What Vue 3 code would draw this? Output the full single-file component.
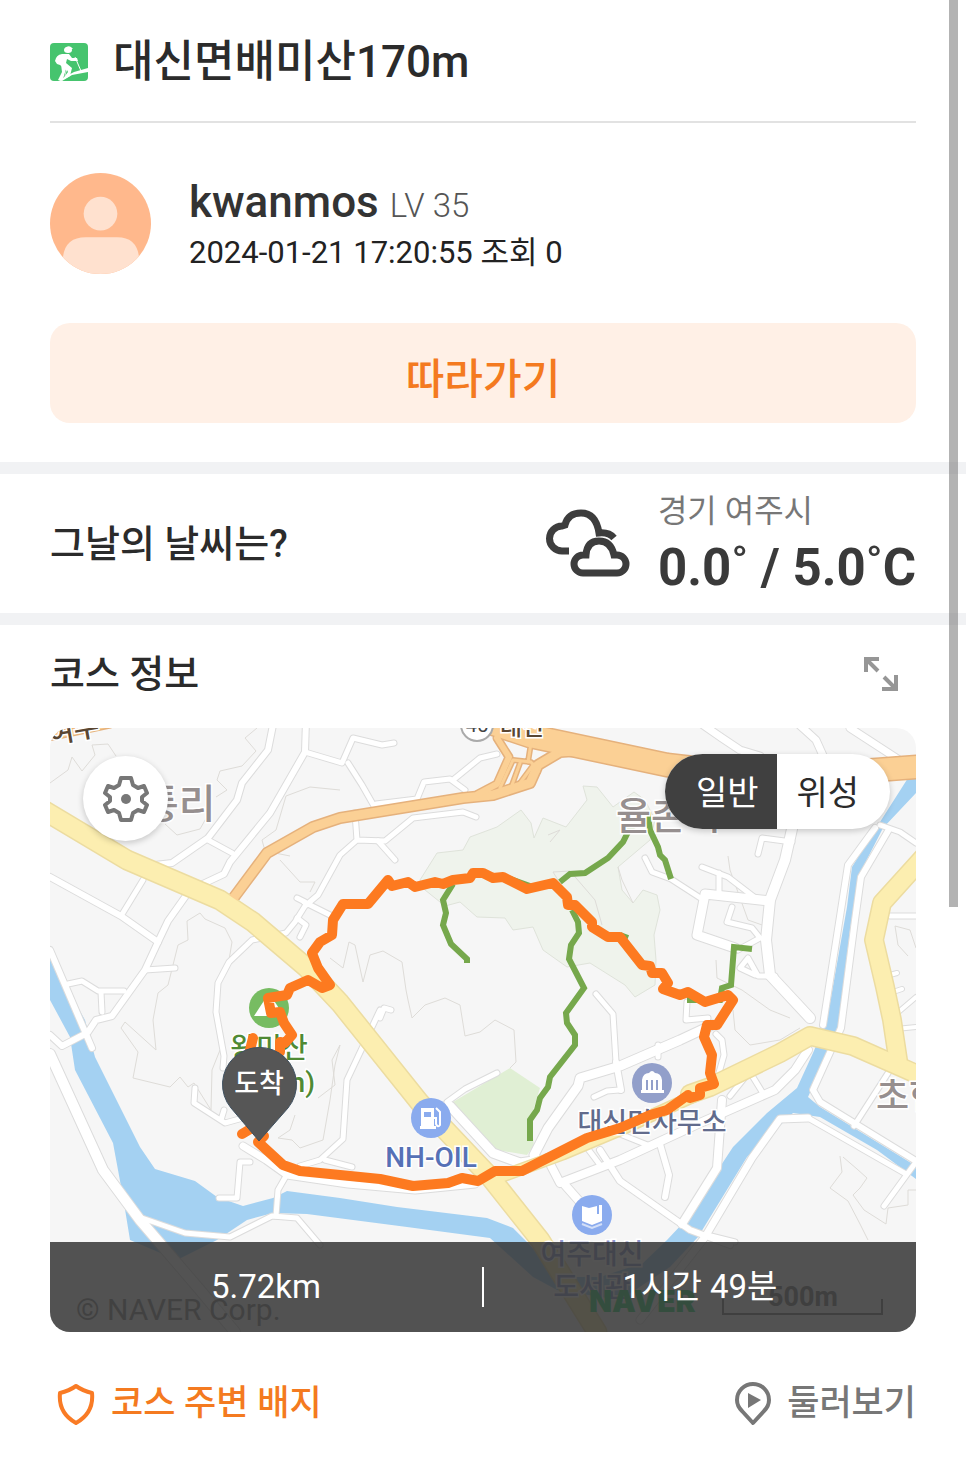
<template>
  <main class="course-view">
    <!-- 코스 제목 -->
    <header class="title-row">
      <svg class="title-icon" viewBox="0 0 38 38" aria-hidden="true">
        <rect width="38" height="38" rx="4" fill="#46c46e" />
        <ellipse cx="18" cy="7" rx="4" ry="3" fill="#fff" />
        <path d="M15 5Q18 2 21 4L23 6H17Z" fill="#fff" />
        <path d="M5 18Q6 12 12 11L19 11L22 15L27 15L28 18L21 18L17 16L16 20L22 25L20 33L14 36L16 27L10 22L7 21Z" fill="#fff" />
        <path d="M11 21L16 26L13 36L11 38L8 37L12 29Z" fill="#fff" />
        <path d="M25 14L31 28" stroke="#fff" stroke-width="1" />
        <path d="M9 37L24 29L38 25V29L22 32L12 38Z" fill="#fff" />
        <path d="M17 27L18 29L15 33Z" fill="#46c46e" />
      </svg>
      <h1>대신면배미산170m</h1>
    </header>

    <!-- 작성자 -->
    <section class="author">
      <svg class="avatar" viewBox="0 0 102 102" aria-hidden="true">
        <defs>
          <clipPath id="avatar-clip"><circle cx="51" cy="51" r="51" /></clipPath>
        </defs>
        <g clip-path="url(#avatar-clip)">
          <rect width="102" height="102" fill="#ffb88c" />
          <circle cx="51" cy="41" r="17" fill="#ffe1cf" />
          <path d="M13 86Q15 65 36 65H68Q88 65 90 86V102H13Z" fill="#ffe1cf" />
        </g>
      </svg>
      <div class="author-text">
        <p class="author-name">{{ course.author }} <span>LV {{ course.level }}</span></p>
        <p class="author-date">{{ course.date }} 조회 {{ course.views }}</p>
      </div>
    </section>

    <div class="follow-row">
      <button type="button" class="follow-btn">따라가기</button>
    </div>

    <!-- 날씨 -->
    <section class="weather">
      <h2>그날의 날씨는?</h2>
      <div class="weather-info">
        <svg class="weather-icon" viewBox="0 0 86 70" fill="none" stroke="#3d3d3d" stroke-width="7" aria-hidden="true">
          <path d="M24 42H17A12 12 0 0 1 17 17L20 16Q23 4 36 4Q51 4 54 24Q64 23 69 29" />
          <path d="M38 64A9 9 0 0 1 38 46H41Q42 32 54 32Q66 32 69 46H72A9 9 0 0 1 72 64Z" />
        </svg>
        <div>
          <p class="weather-place">{{ weather.place }}</p>
          <p class="weather-temp">{{ weather.min }}˚ / {{ weather.max }}˚C</p>
        </div>
      </div>
    </section>

    <!-- 코스 정보 -->
    <section class="course">
      <div class="course-head">
        <h2>코스 정보</h2>
        <button type="button" class="icon-btn" aria-label="지도 확대">
          <svg viewBox="0 0 34 34" width="34" height="34" fill="none" stroke="#969696" stroke-width="4">
            <path d="M15 2H2V15M2 2L14 14M20 20L32 32M32 18V32H18" />
          </svg>
        </button>
      </div>

      <div class="map">
        <svg class="map-canvas" viewBox="50 728 866 604" role="img" aria-label="코스 지도">
          <rect x="50" y="728" width="866" height="604" fill="#f6f6f6" />

          <!-- 숲, 공원 -->
          <path class="forest" d="M437 853L463 850L470 837L497 827L521 810L531 823L534 838L543 818L566 827L587 800L583 786L597 787L613 807L634 792L645 800L655 820L650 840L618 867L622 890L633 903L643 890L657 895L660 910L654 935L656 960L655 985L635 997L625 985L590 963L567 967L543 950L533 927L513 930L505 918L477 917L460 902L445 906L425 890L420 880Z" />
          <path fill="#e0efd4" d="M510 1068L540 1088L530 1120L534 1145L527 1155L497 1150L453 1102Z" />

          <!-- 등고선 -->
          <path v-for="(d, i) in contours" :key="'c' + i" class="contour" :d="d" />

          <!-- 하천 -->
          <path class="water" d="M50 958L85 1020L95 1057L140 1147L155 1169L195 1181L217 1197L243 1206L273 1198L287 1191L340 1198L397 1207L487 1218L513 1228L527 1242L560 1277L600 1277L643 1263L667 1240L683 1223L733 1147L767 1113L797 1088L813 1053L827 1020L847 907L852 867L880 822L908 778L916 775V793L883 828L858 877L850 930L838 1030L808 1097L820 1107L916 1166V1179L877 1150L820 1117L793 1113L747 1157L698 1237L670 1267L620 1300L557 1290L533 1277L490 1238L407 1227L330 1217L307 1214L273 1213L247 1220L217 1240L177 1260L130 1240L123 1197L113 1143L75 1070L70 1037L50 1000Z" />

          <!-- 도로: 외곽선을 먼저 깔고 그 위에 면을 그린다 -->
          <path v-for="(r, i) in roads" :key="'rc' + i" class="road" stroke="#dcdcdc" :stroke-width="r.w + 2" :d="r.d" />
          <path v-for="(r, i) in roads" :key="'r' + i" class="road" stroke="#fff" :stroke-width="r.w" :d="r.d" />
          <path v-for="(r, i) in mainRoads" :key="'mc' + i" class="road" :stroke="r.edge" :stroke-width="r.w + 3" :d="r.d" />
          <path v-for="(r, i) in mainRoads" :key="'m' + i" class="road" :stroke="r.fill" :stroke-width="r.w" :d="r.d" />

          <!-- 등산로 -->
          <path v-for="(d, i) in trails" :key="'t' + i" class="trail" :d="d" />

          <!-- 지명 -->
          <g class="place">
            <text x="142" y="818" font-size="40">통리</text>
            <text x="616" y="829" font-size="38">율촌리</text>
            <text x="876" y="1109" font-size="36">초현</text>
          </g>
          <g class="place road-name">
            <text x="500" y="735" font-size="24">대신</text>
            <text x="50" y="744" font-size="28" transform="rotate(-10 50 744)">여주</text>
          </g>
          <circle cx="477" cy="725" r="16" fill="#fff" stroke="#aaa" stroke-width="2" />
          <text x="477" y="732" font-size="20" text-anchor="middle" class="badge-no">45</text>

          <!-- 산 -->
          <circle cx="269" cy="1008" r="20" fill="#77bc62" />
          <path d="M254 1016L269 993L284 1016Z" fill="#fff" />
          <g class="place mountain">
            <text x="269" y="1058" font-size="28" text-anchor="middle">왕미산</text>
            <text x="315" y="1092" font-size="28" text-anchor="end">(170m)</text>
          </g>

          <!-- 시설 -->
          <g class="place office">
            <circle cx="652" cy="1083" r="20" fill="#929fca" />
            <path d="M642 1080Q643 1073 649 1073Q652 1069 655 1073Q661 1073 662 1080V1090H664V1093H641V1090H642Z" fill="#fff" />
            <path d="M647 1080V1090M652 1080V1090M657 1080V1090" stroke="#929fca" stroke-width="2" />
            <text x="652" y="1132" font-size="27" text-anchor="middle">대신면사무소</text>
          </g>
          <g class="place shop">
            <circle cx="431" cy="1118" r="20" fill="#8aabee" />
            <path d="M421 1108H434V1126H436V1129H420V1126H421Z" fill="#fff" />
            <path d="M424 1112H431V1117H424Z" fill="#8aabee" />
            <path d="M436 1108L440 1112V1125Q438 1128 436 1124V1118H434" fill="none" stroke="#fff" stroke-width="2" />
            <text x="431" y="1167" font-size="28" text-anchor="middle">NH-OIL</text>
          </g>
          <g class="place library">
            <circle cx="592" cy="1215" r="20" fill="#8aabee" />
            <path d="M582 1206L589 1208L597 1206V1214H599V1205H602V1221L592 1225L582 1221Z" fill="#fff" />
            <path d="M582 1224L592 1228L602 1224" stroke="#d3dff8" fill="none" stroke-width="2" />
            <text x="592" y="1264" font-size="28" text-anchor="middle">여주대신</text>
            <text x="592" y="1297" font-size="28" text-anchor="middle">도서관</text>
          </g>

          <!-- 지도 저작권, 축척 -->
          <text x="76" y="1320" font-size="30" class="copyright">© NAVER Corp.</text>
          <text x="589" y="1312" font-size="30" class="naver">NAVER</text>
          <text x="803" y="1306" font-size="27" text-anchor="middle" class="scale">500m</text>
          <path d="M723 1299V1314H882V1299" fill="none" stroke="#777" stroke-width="2" />

          <!-- 이동 경로 -->
          <path class="track" :d="track" />
          <path class="track" d="M253 1038L250 1050M242 1134L252 1128" />

          <!-- 도착 핀 -->
          <path d="M259 1141L231 1108A37 37 0 1 1 288 1108Z" fill="#565656" stroke="#3e5060" stroke-width="1" />
          <text x="259" y="1093" font-size="27" text-anchor="middle" class="pin-label">도착</text>
        </svg>

        <button type="button" class="setting-btn" aria-label="지도 설정">
          <svg viewBox="0 0 46 46" width="46" height="46" fill="none" stroke="#777" stroke-width="4" stroke-linejoin="round">
            <path d="M18 2H28L30 9L35 12L41 10L44 17L39 21V25L44 29L41 36L35 34L30 37L28 44H18L16 37L11 34L5 36L2 29L7 25V21L2 17L5 10L11 12L16 9Z" />
            <circle cx="23" cy="23" r="5" fill="#777" stroke="none" />
          </svg>
        </button>

        <div class="map-type">
          <button
            v-for="t in mapTypes"
            :key="t"
            type="button"
            :class="{ active: t === mapType }"
            :aria-pressed="t === mapType"
            @click="mapType = t"
          >
            {{ t }}
          </button>
        </div>

        <div class="summary">
          <span>{{ course.distance }}</span>
          <i class="summary-line"></i>
          <span>{{ course.time }}</span>
        </div>
      </div>
    </section>

    <!-- 하단 버튼 -->
    <footer class="actions">
      <button type="button" class="badge-btn">
        <svg viewBox="0 0 40 42" width="40" height="42" fill="none" stroke="#f97b25" stroke-width="4" stroke-linejoin="round">
          <path d="M20 3Q27 8 36 10Q38 30 20 40Q2 30 4 10Q13 8 20 3Z" />
        </svg>
        코스 주변 배지
      </button>
      <button type="button" class="look-btn">
        <svg viewBox="0 0 38 44" width="38" height="44" fill="none" stroke="#777" stroke-width="4" stroke-linejoin="round">
          <path d="M19 41L8 29Q3 24 3 18A16 16 0 0 1 35 18Q35 24 30 29Z" />
          <path d="M14 11L27 18L14 26Z" fill="#777" stroke="none" />
        </svg>
        둘러보기
      </button>
    </footer>

    <div class="scroll-thumb"></div>
  </main>
</template>

<script setup>
import { ref } from 'vue'

const course = {
  author: 'kwanmos',
  level: 35,
  date: '2024-01-21 17:20:55',
  views: 0,
  distance: '5.72km',
  time: '1시간 49분',
}

const weather = { place: '경기 여주시', min: '0.0', max: '5.0' }

const mapTypes = ['일반', '위성']
const mapType = ref('일반')

// 주요 도로
const YELLOW = { fill: '#fceeb0', edge: '#ecdca0' }
const ORANGE = { fill: '#fbd095', edge: '#e5b17c' }
const mainRoads = [
  { ...ORANGE, w: 9, d: 'M232 900L267 853L313 827L340 818L463 798L493 795L530 783L538 765L560 752L590 750' },
  { ...ORANGE, w: 6, d: 'M478 794L497 784L509 757L497 738' },
  { ...ORANGE, w: 3, d: 'M500 788L513 760L531 762L538 772M512 785L520 763M520 783L534 764M528 762L531 743' },
  { ...ORANGE, w: 22, d: 'M470 716L530 736L667 765L780 778L850 772L930 766' },
  { ...ORANGE, w: 6, d: 'M44 738L110 724' },
  { ...YELLOW, w: 10, d: 'M500 1177L563 1154L620 1130L703 1092' },
  { ...YELLOW, w: 17, d: 'M930 850L882 903L874 940L885 987L892 1020L898 1060' },
  { ...YELLOW, w: 17, d: 'M690 1094L710 1087L780 1053L810 1036L853 1046L930 1080' },
  { ...YELLOW, w: 18, d: 'M40 808L127 860L220 900L253 922L307 968L340 1003L420 1103L490 1177L540 1240L597 1332' },
]

// 일반 도로
const roads = [
  { w: 6, d: 'M274 720L268 750L242 783L237 800L208 838L172 863L155 865' },
  { w: 6, d: 'M306 720L305 752L270 813L230 862L224 874L190 890L168 921L158 942L145 970L112 1016L96 1020L88 1032' },
  { w: 5, d: 'M305 752L342 763L353 738L382 745L394 743M348 763L362 785L374 806' },
  { w: 5, d: 'M208 840L232 853M143 880L121 916' },
  { w: 6, d: 'M50 877L121 916L158 942' },
  { w: 5, d: 'M145 970L175 968M68 984L82 981L98 991L124 991M101 992L102 1012' },
  { w: 6, d: 'M50 950L92 1048M50 1035L62 1046L85 1034' },
  { w: 5, d: 'M355 813L357 840L385 841L413 818L463 812L476 817M357 840L340 855L318 895L305 906L295 922L286 933L252 940L229 962L218 983L216 1012L224 1056L223 1068' },
  { w: 5, d: 'M378 841L395 860M304 902L332 916M297 898L305 902M297 918L306 925L300 937' },
  { w: 5, d: 'M376 804L417 799L424 782L450 779L465 790M453 780L480 758L497 754' },
  { w: 10, d: 'M50 1054L103 1170L140 1220L200 1290L235 1332' },
  { w: 5, d: 'M142 1218L185 1233L230 1237L272 1216L297 1218L320 1245' },
  { w: 5, d: 'M195 1088L194 1103L225 1123L243 1118M221 1120L224 1110M250 1162H240L237 1198H219M276 1216L278 1190L286 1176' },
  { w: 7, d: 'M243 1146L266 1160L287 1175L348 1184L415 1190L475 1184' },
  { w: 5, d: 'M300 1166L320 1160L343 1139L347 1080L380 1010M325 1160L352 1167' },
  { w: 5, d: 'M380 1018L384 1008L391 1010M447 1102L465 1089L497 1073M596 994L613 1014L616 1062' },
  { w: 9, d: 'M450 1106L493 1153L520 1163L540 1160M534 1155L548 1128L578 1086L580 1078L620 1066L680 1040L712 1025' },
  { w: 8, d: 'M547 1158L560 1183L620 1160L700 1123L775 1090L795 1070L808 1050' },
  { w: 6, d: 'M616 1062L621 1090M600 1150L620 1181L690 1230L730 1245M660 1144L669 1175L665 1197' },
  { w: 5, d: 'M594 1097L607 1091L619 1090M658 1045V1057M610 1130L650 1146M585 1145L600 1165' },
  { w: 8, d: 'M722 1100L717 1168L682 1224M565 1185L580 1202' },
  { w: 5, d: 'M715 1087L724 1055L722 1040L716 1034M748 1069L764 1095M750 1071L730 1096' },
  { w: 7, d: 'M696 720L722 738L740 750L760 756M794 720L816 740L825 760M850 728L910 767' },
  { w: 10, d: 'M792 829L785 860L770 900L766 940L770 975L810 1018' },
  { w: 9, d: 'M770 901L705 894L697 935L735 948' },
  { w: 5, d: 'M702 899L671 879L652 872L645 858M702 867L728 877L758 900M719 873V893M732 907L727 922L752 928L760 938L738 950' },
  { w: 5, d: 'M758 854L762 838L792 842M755 975L740 968L748 958L758 976L775 976M687 1002L686 1020L708 1018' },
  { w: 6, d: 'M875 828L848 865L841 910L823 1025M888 831L861 877L855 920L841 1028L813 1090L820 1102L916 1161' },
  { w: 5, d: 'M880 825L900 832L916 843M890 916H916M854 1126L890 1070' },
  { w: 7, d: 'M808 1118L780 1119L752 1158L705 1237L640 1320' },
  { w: 5, d: 'M808 1118L906 1174M916 1162L884 1206M707 1235L735 1242' },
  { w: 4, d: 'M895 1015L916 997M896 1029L916 1027M890 975L897 973M893 992L902 989' },
]

const contours = [
  'M50 783L68 770L72 757L82 771L95 755L92 745L108 744L116 756',
  'M257 728L245 738L256 751L242 766L220 771L217 780L227 790L216 797',
  'M165 824L177 835L200 829L208 815M340 790L310 787L286 796L276 830L262 840L265 851L290 856M280 860L300 882L315 882L310 892',
  'M229 960L232 942L225 928L205 919L200 913L187 921L188 940L178 945L168 985L158 993L153 1020L156 1050L125 1022L121 1028L138 1052L133 1078L170 1087L180 1077L188 1087L194 1083L211 1110L212 1070L220 1050',
  'M330 958L343 968L349 942L355 945L363 982L370 955L383 951L402 962L406 990L408 1000L412 1018L425 1005L445 998L460 1005L465 1036L480 1032L495 1020L514 1030L516 1062L510 1068',
  'M318 1098L335 1085L332 1060L340 1045L335 1065L330 1100L323 1140L300 1148L292 1140L278 1138L290 1130L295 1115',
  'M728 856L730 870L748 920L765 926M840 1156L842 1172L830 1188L848 1201L860 1224L868 1240M843 1157L857 1169L867 1178L860 1188L853 1195L864 1210L886 1224L888 1208L908 1205L908 1190L916 1190',
  'M733 1010L735 1030L750 1045L780 1040L800 1028M716 960L717 978L742 990L770 1010L790 1018M895 926L910 930L916 948M895 926L898 945L908 956',
  'M550 842L560 830L548 835M633 903L622 880L618 867M558 880L553 872L570 871L595 900L602 925',
]

// 등산로
const trails = [
  'M453 884L443 900L446 913L443 925L451 944L467 959V963',
  'M560 882L570 874L585 873L608 858L623 842L630 828L648 817L650 830L658 847L660 855L665 860L671 879',
  'M505 877L530 886M572 910L578 922L579 933L571 945L569 959L584 988L566 1013L567 1023L575 1035V1045L550 1077L548 1087L540 1098L537 1110L530 1120V1141',
  'M752 949L734 947L731 985L722 988L720 1000H687M620 935L628 938',
]

// 기록된 이동 경로
const track =
  'M280 1052L280 1042L285 1043L292 1035L284 1023L280 1012L271 1013L268 998L287 995L290 988L308 980L322 988L330 985L318 968L312 953L320 942L332 935L333 920L343 904H368L388 880L392 886L408 882L415 887L435 882L443 884L453 880L470 878L473 873H483L493 878L503 877L527 889L553 883L567 897L568 905H575L592 922V927L608 937H620L642 965L650 966L652 973H662L668 983L663 989L680 995L688 992L705 1002L728 995L733 1000L717 1025H707L704 1037L712 1055L710 1073L714 1084L700 1088V1095L690 1098L688 1095L667 1110L650 1115L620 1128L587 1138L522 1171H495L478 1181L462 1178L448 1183L413 1186L380 1179L330 1174L300 1171L283 1165L258 1142L264 1136'
</script>

<style>
body {
  margin: 0;
  background: #fff;
}
</style>

<style scoped>
.course-view {
  position: relative;
  font-family: Roboto, 'Noto Sans CJK KR', sans-serif;
  color: #2b2b2b;
}
h1,
h2,
p {
  margin: 0;
  font-weight: 500;
}
button {
  padding: 0;
  border: 0;
  background: none;
  font: inherit;
  color: inherit;
  cursor: pointer;
}

/* 제목 */
.title-row {
  display: flex;
  align-items: center;
  gap: 25px;
  height: 118px;
  margin: 0 50px;
  padding-top: 3px;
  border-bottom: 2px solid #e2e2e2;
}
.title-icon {
  width: 38px;
  height: 38px;
}
h1 {
  font-size: 44px;
  line-height: 64px;
}

/* 작성자 */
.author {
  display: flex;
  align-items: center;
  gap: 38px;
  padding: 49px 50px 48px;
}
.avatar {
  width: 101px;
  height: 101px;
}
.author-text {
  padding-top: 5px;
}
.author-name {
  font-size: 44px;
  line-height: 50px;
  color: #333;
}
.author-name span {
  font-size: 33px;
  font-weight: 300;
  color: #555;
}
.author-date {
  font-size: 31px;
  line-height: 44px;
  font-weight: 400;
  color: #222;
}
.follow-row {
  padding: 0 50px 39px;
}
.follow-btn {
  display: block;
  width: 100%;
  height: 100px;
  padding-top: 4px;
  border-radius: 20px;
  background: #fff0e6;
  color: #f47a20;
  font-size: 42px;
  font-weight: 500;
}

/* 날씨 */
.weather {
  display: flex;
  align-items: center;
  justify-content: space-between;
  height: 139px;
  padding: 0 50px;
  border-top: 12px solid #f1f2f4;
  border-bottom: 12px solid #f1f2f4;
}
h2 {
  font-size: 38px;
  line-height: 56px;
}
.weather-info {
  display: flex;
  align-items: center;
  gap: 27px;
}
.weather-icon {
  width: 86px;
  height: 70px;
}
.weather-place {
  font-size: 32px;
  line-height: 48px;
  font-weight: 400;
  color: #777;
}
.weather-temp {
  font-size: 51px;
  line-height: 66px;
  font-weight: 700;
  color: #3a3a3a;
  white-space: nowrap;
}

/* 코스 */
.course {
  padding: 0 50px;
}
.course-head {
  display: flex;
  align-items: center;
  justify-content: space-between;
  height: 97px;
  padding: 0 18px 6px 0;
}
.icon-btn svg {
  display: block;
}
.map {
  position: relative;
  overflow: hidden;
  border-radius: 20px;
}
.map-canvas {
  display: block;
  width: 100%;
}
.forest {
  fill: #eff3ec;
  stroke: #dfe3da;
  stroke-width: 1;
}
.contour {
  fill: none;
  stroke: #dedcd8;
  stroke-width: 1;
}
.water {
  fill: #a4d1f2;
}
.road {
  fill: none;
  stroke-linecap: round;
  stroke-linejoin: round;
}
.trail {
  fill: none;
  stroke: #76a84c;
  stroke-width: 6;
}
.track {
  fill: none;
  stroke: #fd7a20;
  stroke-width: 10;
  stroke-linecap: round;
  stroke-linejoin: round;
}
.place {
  fill: #968f8f;
  font-weight: 500;
}
.place text {
  paint-order: stroke;
  stroke: #fff;
  stroke-width: 3;
}
.road-name {
  fill: #5a4632;
}
.badge-no {
  fill: #444;
}
.mountain {
  fill: #4f8a34;
}
.office {
  fill: #626b8c;
}
.shop {
  fill: #5671b6;
}
.library {
  fill: #8f97cc;
}
.copyright {
  fill: #888;
}
.naver {
  fill: #30d870;
  font-family: Inter, sans-serif;
  font-weight: 900;
}
.scale {
  fill: #777;
  font-weight: 700;
}
.pin-label {
  fill: #fff;
  font-weight: 500;
}
.setting-btn {
  position: absolute;
  top: 28px;
  left: 33px;
  display: flex;
  align-items: center;
  justify-content: center;
  width: 85px;
  height: 85px;
  border-radius: 50%;
  background: #fff;
  box-shadow: 0 2px 6px rgba(0, 0, 0, 0.2);
}
.map-type {
  position: absolute;
  top: 26px;
  right: 26px;
  display: flex;
  overflow: hidden;
  border-radius: 38px;
  background: #fff;
  box-shadow: 0 2px 6px rgba(0, 0, 0, 0.2);
}
.map-type button {
  height: 75px;
  padding: 0 31px 2px 19px;
  font-size: 34px;
}
.map-type .active {
  padding: 0 19px 2px 31px;
  background: #404040;
  color: #fff;
}
.summary {
  position: absolute;
  right: 0;
  bottom: 0;
  left: 0;
  display: flex;
  align-items: center;
  height: 90px;
  background: rgba(53, 53, 53, 0.85);
  color: #fff;
  font-size: 33px;
  line-height: 40px;
}
.summary span {
  flex: 1;
  text-align: center;
}
.summary-line {
  width: 2px;
  height: 40px;
  background: #fff;
}

/* 하단 */
.actions {
  display: flex;
  align-items: center;
  justify-content: space-between;
  padding: 46px 50px 27px;
  font-size: 35px;
  line-height: 52px;
  font-weight: 500;
}
.actions button {
  display: flex;
  align-items: center;
  gap: 15px;
}
.badge-btn {
  padding-left: 6px;
  color: #f47a20;
}
.look-btn {
  color: #777;
}

.scroll-thumb {
  position: absolute;
  top: 0;
  right: 8px;
  width: 9px;
  height: 907px;
  background: rgba(120, 120, 120, 0.56);
}
</style>
